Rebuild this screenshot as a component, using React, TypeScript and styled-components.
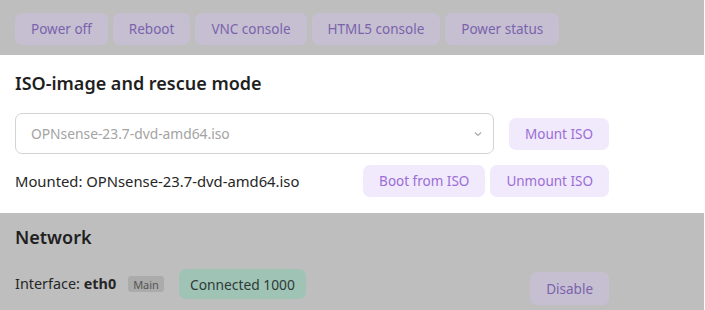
import styled, { createGlobalStyle, css } from 'styled-components';

const GlobalStyle = createGlobalStyle`
  html, body {
    margin: 0;
    padding: 0;
    background: #ffffff;
  }
  body {
    font-family: 'Noto Sans', 'Open Sans', sans-serif;
    color: #222222;
  }
`;

const Page = styled.div`
  width: 704px;
  display: flex;
  flex-direction: column;
`;

const Section = styled.section<{ $dimmed?: boolean }>`
  display: flex;
  flex-direction: column;
  box-sizing: border-box;
  padding: ${props => (props.$dimmed ? '0 15px' : '16px 15px 16px')};
  background: ${props => (props.$dimmed ? '#bebebe' : '#ffffff')};
`;

const ActionBar = styled.div`
  display: flex;
  gap: 5px;
  height: 55px;
  padding-top: 13px;
  box-sizing: border-box;
`;

const Heading = styled.h2`
  margin: 0;
  font-size: 18px;
  font-weight: 600;
  line-height: 24px;
  color: #1f1f1f;
`;

const Button = styled.button<{ $dimmed?: boolean }>`
  height: 32px;
  padding: 0 16px;
  border: none;
  border-radius: 7px;
  font-family: inherit;
  font-size: 13.5px;
  white-space: nowrap;
  cursor: pointer;
  ${props =>
    props.$dimmed
      ? css`
          background: #c6bfd2;
          color: #7a63ab;
        `
      : css`
          background: #f1e9fc;
          color: #9a6ed6;
        `}
`;

const Row = styled.div`
  width: 594px;
  display: flex;
  align-items: center;
  gap: 5px;
`;

const SelectRow = styled(Row)`
  gap: 15px;
  margin-top: 18px;
`;

const MountedRow = styled(Row)`
  margin-top: 11px;
  justify-content: space-between;
`;

const ButtonGroup = styled.div`
  display: flex;
  gap: 5px;
`;

const SelectBox = styled.div`
  flex: 1;
  height: 41px;
  box-sizing: border-box;
  display: flex;
  align-items: center;
  justify-content: space-between;
  padding: 0 10px 0 15px;
  border: 1px solid #d3d3d3;
  border-radius: 7px;
  font-size: 13.8px;
  color: #a3a3a3;
`;

const Label = styled.span`
  font-size: 14.8px;
  color: #262626;
`;

const NetworkSection = styled(Section)`
  height: 97px;
  padding-top: 12px;
`;

const NetworkRow = styled(Row)`
  margin-top: 20px;
  align-items: flex-start;
`;

const Badge = styled.span<{ $tone: 'plain' | 'ok' }>`
  display: inline-flex;
  align-items: center;
  border-radius: ${props => (props.$tone === 'ok' ? '7px' : '3px')};
  ${props =>
    props.$tone === 'ok'
      ? css`
          height: 30px;
          margin-left: 10px;
          padding: 0 11px;
          font-size: 13.8px;
          background: #9fc4b6;
          color: #2f3a36;
        `
      : css`
          height: 16px;
          margin-top: 7px;
          padding: 0 5px;
          font-size: 11px;
          background: #ababab;
          color: #555555;
        `}
`;

const Interface = styled(Label)`
  margin-right: 7px;
  font-size: 14.4px;
  line-height: 30px;
  b {
    font-weight: 700;
  }
`;

const Spacer = styled.div`
  flex: 1;
`;

const DisableButton = styled(Button)`
  margin-top: 3px;
  height: 33px;
`;

const Chevron = () => (
  <svg width="10" height="10" viewBox="0 0 10 10" fill="none">
    <path d="M2 3.5 L5 6.5 L8 3.5" stroke="#a8a8a8" strokeWidth="1.1" />
  </svg>
);

const actions = ['Power off', 'Reboot', 'VNC console', 'HTML5 console', 'Power status'];

const App = () => {
  return (
    <Page>
      <GlobalStyle />
      <Section $dimmed>
        <ActionBar>
          {actions.map(a => (
            <Button key={a} $dimmed>
              {a}
            </Button>
          ))}
        </ActionBar>
      </Section>
      <Section>
        <Heading>ISO-image and rescue mode</Heading>
        <SelectRow>
          <SelectBox>
            OPNsense-23.7-dvd-amd64.iso
            <Chevron />
          </SelectBox>
          <Button>Mount ISO</Button>
        </SelectRow>
        <MountedRow>
          <Label>Mounted: OPNsense-23.7-dvd-amd64.iso</Label>
          <ButtonGroup>
            <Button>Boot from ISO</Button>
            <Button>Unmount ISO</Button>
          </ButtonGroup>
        </MountedRow>
      </Section>
      <NetworkSection $dimmed>
        <Heading>Network</Heading>
        <NetworkRow>
          <Interface>
            Interface: <b>eth0</b>
          </Interface>
          <Badge $tone="plain">Main</Badge>
          <Badge $tone="ok">Connected 1000</Badge>
          <Spacer />
          <DisableButton $dimmed>Disable</DisableButton>
        </NetworkRow>
      </NetworkSection>
    </Page>
  );
};

export default App;
